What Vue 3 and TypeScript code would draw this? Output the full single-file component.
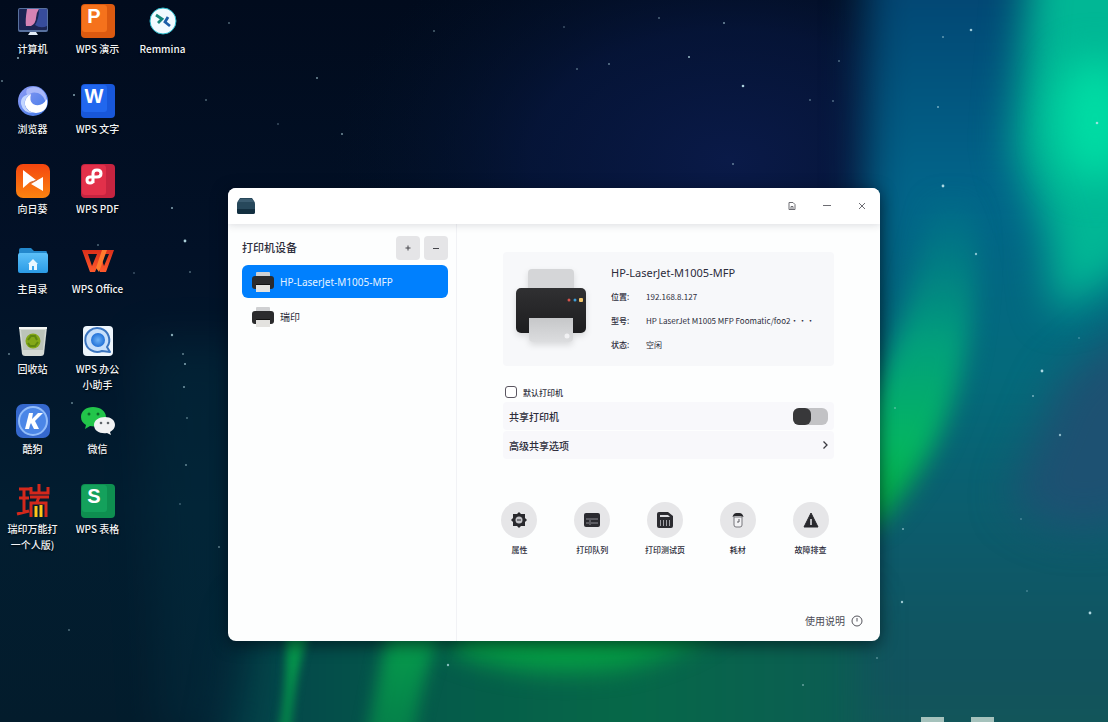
<script setup lang="ts">
import { ref } from 'vue'

interface Shortcut {
  icon: string
  label: string
  color?: string
  dark?: string
  letter?: string
}

const shortcuts: Shortcut[] = [
  { icon: 'computer', label: '计算机' },
  { icon: 'browser', label: '浏览器' },
  { icon: 'sunflower', label: '向日葵' },
  { icon: 'home', label: '主目录' },
  { icon: 'trash', label: '回收站' },
  { icon: 'kugou', label: '酷狗' },
  { icon: 'ruiyin', label: '瑞印万能打\n一个人版)' },
  { icon: 'key', label: 'WPS 演示', color: '#f5721c', dark: '#dc5a10', letter: 'P' },
  { icon: 'key', label: 'WPS 文字', color: '#2167ee', dark: '#1857da', letter: 'W' },
  { icon: 'pdf', label: 'WPS PDF' },
  { icon: 'wps', label: 'WPS Office' },
  { icon: 'helper', label: 'WPS 办公\n小助手' },
  { icon: 'wechat', label: '微信' },
  { icon: 'key', label: 'WPS 表格', color: '#14a15c', dark: '#0e8f50', letter: 'S' },
  { icon: 'remmina', label: 'Remmina' }
]

const printers = ['HP-LaserJet-M1005-MFP', '瑞印']
const selected = ref(0)
const isDefault = ref(false)
const shared = ref(false)

const details = [
  { name: '位置:', value: '192.168.8.127' },
  { name: '型号:', value: 'HP LaserJet M1005 MFP Foomatic/foo2···' },
  { name: '状态:', value: '空闲' }
]

const actions = [
  { icon: 'gear', label: '属性' },
  { icon: 'queue', label: '打印队列' },
  { icon: 'test', label: '打印测试页' },
  { icon: 'supply', label: '耗材' },
  { icon: 'warn', label: '故障排查' }
]

const stars: [number, number, number, number][] = [
  [689, 57, 1, 0.8], [743, 86, 1.3, 0.9], [724, 23, 1, 0.6], [659, 18, 1, 0.4], [609, 64, 1, 0.5],
  [185, 241, 1.4, 0.9], [172, 208, 1, 0.7], [229, 23, 1, 0.4], [434, 31, 1, 0.4], [317, 78, 1, 0.6],
  [206, 100, 1, 0.4], [342, 134, 1, 0.6], [278, 124, 1, 0.3], [564, 27, 1, 0.3], [577, 69, 1, 0.4],
  [733, 164, 1, 0.5], [839, 61, 1, 0.4], [971, 30, 1.3, 0.8], [943, 37, 1, 0.5], [938, 107, 1, 0.6],
  [943, 186, 1.4, 0.9], [976, 254, 1.2, 0.7], [1097, 123, 1.3, 0.8], [1042, 371, 1.4, 0.9], [1033, 396, 1, 0.6],
  [1060, 435, 1.2, 0.7], [903, 529, 1, 0.6], [902, 602, 1.2, 0.8], [1090, 613, 1.4, 0.9], [1027, 591, 1, 0.3],
  [803, 685, 1, 0.5], [877, 658, 1, 0.4], [448, 665, 1.2, 0.7], [219, 547, 1, 0.5], [69, 630, 1, 0.4],
  [172, 335, 1.2, 0.7], [185, 364, 1, 0.7], [183, 354, 1, 0.5], [184, 387, 1, 0.6], [72, 403, 1, 0.5],
  [9, 354, 1, 0.5], [187, 418, 1, 0.4], [186, 465, 1, 0.5], [180, 504, 1, 0.3], [18, 58, 1.1, 0.7],
  [2, 81, 1, 0.5], [74, 95, 1, 0.7], [98, 245, 1, 0.4], [134, 273, 1, 0.3], [190, 272, 1, 0.4],
  [1021, 519, 1, 0.3], [1079, 338, 1, 0.3], [833, 101, 1, 0.4], [810, 100, 1, 0.4], [895, 408, 1, 0.4]
]
</script>

<template>
  <div class="desktop">
    <svg class="wallpaper" viewBox="0 0 1108 722" preserveAspectRatio="none" color-interpolation-filters="sRGB" aria-hidden="true">
      <defs>
        <linearGradient id="night" x1="0" y1="0" x2="0" y2="1">
          <stop offset="0" stop-color="#010b1d" />
          <stop offset="0.35" stop-color="#021127" />
          <stop offset="0.7" stop-color="#021d30" />
          <stop offset="1" stop-color="#031c2c" />
        </linearGradient>
        <radialGradient id="navy">
          <stop offset="0" stop-color="#0a1a48" />
          <stop offset="0.5" stop-color="#071740" stop-opacity="0.7" />
          <stop offset="1" stop-color="#021127" stop-opacity="0" />
        </radialGradient>
        <linearGradient id="east" x1="0" y1="0" x2="0" y2="1">
          <stop offset="0" stop-color="#033c6c" />
          <stop offset="0.3" stop-color="#02658a" />
          <stop offset="0.5" stop-color="#046b7c" />
          <stop offset="0.7" stop-color="#0d5a6a" />
          <stop offset="0.85" stop-color="#12525c" />
          <stop offset="1" stop-color="#116056" />
        </linearGradient>
        <linearGradient id="ribbon" gradientUnits="userSpaceOnUse" x1="0" y1="190" x2="0" y2="530">
          <stop offset="0" stop-color="#008c8c" stop-opacity="0" />
          <stop offset="0.45" stop-color="#02a07c" />
          <stop offset="0.75" stop-color="#04b562" />
          <stop offset="1" stop-color="#04a838" />
        </linearGradient>
        <linearGradient id="streak" gradientUnits="userSpaceOnUse" x1="0" y1="630" x2="0" y2="722">
          <stop offset="0" stop-color="#069e4c" />
          <stop offset="1" stop-color="#05824a" />
        </linearGradient>
        <linearGradient id="meadow" gradientUnits="userSpaceOnUse" x1="220" y1="0" x2="900" y2="0">
          <stop offset="0" stop-color="#03404a" />
          <stop offset="0.3" stop-color="#055a4a" />
          <stop offset="0.6" stop-color="#066848" />
          <stop offset="1" stop-color="#0d5a55" />
        </linearGradient>
        <filter id="soft4" x="-50%" y="-50%" width="200%" height="200%"><feGaussianBlur stdDeviation="4" /></filter>
        <filter id="soft8" x="-50%" y="-50%" width="200%" height="200%"><feGaussianBlur stdDeviation="8" /></filter>
        <filter id="soft12" x="-50%" y="-50%" width="200%" height="200%"><feGaussianBlur stdDeviation="12" /></filter>
        <filter id="soft20" x="-50%" y="-50%" width="200%" height="200%"><feGaussianBlur stdDeviation="20" /></filter>
      </defs>
      <rect width="1108" height="722" fill="url(#night)" />
      <ellipse cx="730" cy="160" rx="400" ry="260" fill="url(#navy)" />
      <path d="M866-80 L1200-80 L1200 820 L560 820 L640 600 L866 400Z" fill="url(#east)" filter="url(#soft20)" />
      <path d="M250 610 L860 600 L860 790 L215 790Z" fill="url(#meadow)" filter="url(#soft20)" />
      <path d="M1160 300 L1160 500 Q1080 560 1010 500 L1060 380Z" fill="#1d5172" filter="url(#soft20)" />
      <path d="M1032-60 L1170-60 L1170 200 L1130 270 L1056 315 L1046 230 L1014 150Z" fill="#01b795" filter="url(#soft20)" />
      <ellipse cx="1095" cy="120" rx="40" ry="62" fill="#00dca4" filter="url(#soft20)" />
      <path d="M975 170 C982 310 968 430 880 522 L780 560 L850 430 C900 350 925 270 930 170Z" fill="url(#ribbon)" filter="url(#soft12)" />
      <path d="M470 600 L740 600 Q720 645 620 668 Q520 680 450 650Z" fill="#05a045" filter="url(#soft12)" />
      <path d="M286 625 L312 625 Q294 670 291 740 L276 740 Q288 690 286 625Z" fill="url(#streak)" filter="url(#soft4)" />
      <path d="M390 620 L446 620 Q420 680 414 740 L366 740Z" fill="url(#streak)" filter="url(#soft8)" />
      <path d="M140 340 L250 340 L250 740 L160 740Z" fill="#033243" opacity="0.4" filter="url(#soft20)" />
      <circle v-for="(s, i) in stars" :key="i" :cx="s[0]" :cy="s[1]" :r="s[2]" fill="#bfe6ee" :opacity="s[3]" />
      <path d="M921 717h23v5h-23zM971 717h23v5h-23z" fill="#a5c2bc" />
    </svg>

    <nav class="shortcuts" aria-label="桌面">
      <button v-for="s in shortcuts" :key="s.label" type="button" class="shortcut">
        <svg class="shortcut-icon" viewBox="0 0 34 34" aria-hidden="true">
          <defs>
            <linearGradient id="swirl" x1="0" y1="0" x2="1" y2="1"><stop offset="0" stop-color="#8f9cf5" /><stop offset="1" stop-color="#3f78e6" /></linearGradient>
            <linearGradient id="orange" x1="0" y1="0" x2="0" y2="1"><stop offset="0" stop-color="#f4450f" /><stop offset="1" stop-color="#fb8410" /></linearGradient>
            <linearGradient id="folder" x1="0" y1="0" x2="0" y2="1"><stop offset="0" stop-color="#5cc0f8" /><stop offset="1" stop-color="#2a9be6" /></linearGradient>
            <linearGradient id="wpsred" x1="0" y1="0" x2="0" y2="1"><stop offset="0" stop-color="#dc2f1a" /><stop offset="1" stop-color="#ff5a2c" /></linearGradient>
            <radialGradient id="ball"><stop offset="0" stop-color="#6db2f6" /><stop offset="1" stop-color="#2372d8" /></radialGradient>
          </defs>

          <g v-if="s.icon === 'key'">
            <rect width="34" height="34" rx="4" :fill="s.dark" />
            <rect x="1" y="1" width="25" height="27" rx="3" :fill="s.color" />
            <text x="13" y="19" text-anchor="middle" class="key-letter">{{ s.letter }}</text>
          </g>
          <g v-else-if="s.icon === 'pdf'">
            <rect width="34" height="34" rx="4" fill="#c62440" />
            <rect x="1" y="1" width="24" height="30" rx="3" fill="#e2304a" />
            <path d="M12 19V9.500q0-3.500 4-3.500t4 3.500t-4 3.500H9q-3 0-3 3t3 3t3-3" fill="none" stroke="#fff" stroke-width="3" />
          </g>
          <g v-else-if="s.icon === 'computer'">
            <rect x="2" y="4" width="30" height="24" rx="2" fill="#57709e" />
            <rect x="3" y="5" width="28" height="21" rx="1" fill="#1b2553" />
            <path d="M11 5h12q-3 4-3 9t-5 8h-5q-1-5 1-17z" fill="#d683b4" />
            <path d="M23 5h8v17q-6 3-12-1q4-6 4-16z" fill="#374c9b" />
            <path d="M14 28h6l2 3H12z" fill="#e4edf8" />
          </g>
          <g v-else-if="s.icon === 'browser'">
            <circle cx="17" cy="17" r="15" fill="url(#swirl)" />
            <path d="M11 5q10-5 17 3q4 6 2 12q-2-9-8-11q-7-2-10 3q-3-3-1-7z" fill="#a9b8fa" />
            <path d="M31 15q2 13-11 14q-9-1-11-8q-1-7 6-11q-2 7 2 10q8 4 14-5z" fill="#fff" />
            <path d="M15 10q-8 4-6 12q2 5 8 7q-10 0-12-9q-1-9 10-10z" fill="#c3d6ff" />
          </g>
          <g v-else-if="s.icon === 'sunflower'">
            <rect width="34" height="34" rx="7" fill="url(#orange)" />
            <path d="M7 6l13 10-6 2-7 6zM27 13v14l-12-7 5-3z" fill="#fff" />
            <path d="M14 19l7-3" stroke="#c5724a" stroke-width="1" />
          </g>
          <g v-else-if="s.icon === 'home'">
            <path d="M3 6q0-2 2-2h10l3 3h12q1 0 1 2v8H3z" fill="#2388cc" />
            <rect x="2" y="9" width="30" height="20" rx="2" fill="url(#folder)" />
            <path d="M17 15l5 5h-1v6h-3v-4h-2v4h-3v-6h-1z" fill="#e8f7ff" />
          </g>
          <g v-else-if="s.icon === 'trash'">
            <path d="M3 3h28l-3 27q-.4 2-3 2H9q-2.600 0-3-2z" fill="#d5dad5" />
            <path d="M5 6h24l-2 20H7z" fill="#bcc4ba" />
            <path d="M3 3h28v2H3z" fill="#f4f6f3" />
            <circle cx="17" cy="17" r="7.500" fill="#84a819" />
            <path d="M12 16l3-4h4l2 4M22 18l-3 4h-5l-2-3" stroke="#5f870f" stroke-width="2" fill="none" />
          </g>
          <g v-else-if="s.icon === 'kugou'">
            <rect width="34" height="34" rx="7" fill="#3568cd" />
            <circle cx="17" cy="17" r="14" fill="#4b86e7" stroke="#93bdfa" stroke-width="2" />
            <path d="M13 9h4l-1 6 6-6h5l-8 8 4 8h-5l-3-6-1 2-1 4H9z" fill="#fff" />
          </g>
          <g v-else-if="s.icon === 'ruiyin'" fill="none" stroke="#d3281c" stroke-width="3">
            <path d="M3 5h11M3 14h10M1 30l12-3M8 5v23M15 3v6h17V3M23 0v8M14 13h19M23 13l-2 5M15 33V19h15v14" />
            <path d="M20 22v11M25 21v12" stroke="#ffc61a" />
          </g>
          <g v-else-if="s.icon === 'wps'">
            <path d="M1 6h32L25 28h-6l-2-7-3 7H9z" fill="url(#wpsred)" />
            <path d="M7 10h9l-5 12zM23 10h5l-5 12-2-6z" fill="#071525" />
            <path d="M15 24l6-18h5l-8 22z" fill="#ff7b2e" />
          </g>
          <g v-else-if="s.icon === 'helper'">
            <rect x="2" y="2" width="30" height="30" rx="4" fill="#edf5fc" />
            <path d="M26 23a12 12 0 1 0-5 4l8 1z" fill="#c8e0fb" stroke="#3a74bf" stroke-width="2" stroke-linejoin="round" />
            <circle cx="17" cy="16" r="7" fill="url(#ball)" />
          </g>
          <g v-else-if="s.icon === 'wechat'">
            <path d="M12 3c-7 0-12 4-12 10 0 4 2 6 5 8l-1 4 5-3c10 2 16-3 16-9S19 3 12 3z" fill="#22c54a" />
            <circle cx="8" cy="10" r="1.500" fill="#0c6c2a" /><circle cx="17" cy="10" r="1.500" fill="#0c6c2a" />
            <path d="M24 13c-6 0-11 3-11 8 0 6 6 9 13 8l4 2-1-3c3-2 5-4 5-7 0-5-4-8-10-8z" fill="#f1f2f3" />
            <circle cx="20" cy="19" r="1.300" fill="#60656a" /><circle cx="27" cy="19" r="1.300" fill="#60656a" />
          </g>
          <g v-else>
            <circle cx="17" cy="17" r="13" fill="#f2fbff" stroke="#27b7c9" stroke-width="1" />
            <path d="M10 11l6 4-4 4" fill="none" stroke="#15857b" stroke-width="2.800" />
            <path d="M22 13l-3 5 5 4" fill="none" stroke="#1d5fa8" stroke-width="2.800" />
          </g>
        </svg>
        <span class="shortcut-label">{{ s.label }}</span>
      </button>
    </nav>

    <main class="window">
      <header class="titlebar">
        <svg class="app-icon" viewBox="0 0 20 16" aria-hidden="true">
          <path d="M4 0h12l2 3q1 1 1 3v8q0 2-2 2H3q-2 0-2-2V6q0-2 1-3z" fill="#27485b" />
          <path d="M4 1h12l2 3H2z" fill="#3b5c70" />
          <path d="M1 11h18v3q0 2-2 2H3q-2 0-2-2z" fill="#132f40" />
        </svg>
        <div class="controls">
          <button type="button" aria-label="菜单">
            <svg viewBox="0 0 10 10"><path d="M2 8.500V1.500h4l2 2v5zM4 8.500v-3h2v3" /></svg>
          </button>
          <button type="button" aria-label="最小化">
            <svg viewBox="0 0 10 10"><path d="M1 4.500h8" /></svg>
          </button>
          <button type="button" aria-label="关闭">
            <svg viewBox="0 0 10 10"><path d="M2 2l6 6M8 2l-6 6" /></svg>
          </button>
        </div>
      </header>

      <div class="body">
        <aside class="sidebar">
          <div class="sidebar-head">
            <h2>打印机设备</h2>
            <button type="button" aria-label="添加"><svg viewBox="0 0 10 10"><path d="M5 2.500v5M2.500 5h5" /></svg></button>
            <button type="button" aria-label="删除"><svg viewBox="0 0 10 10"><path d="M2 5.500h6" /></svg></button>
          </div>
          <ul class="printers">
            <li v-for="(p, i) in printers" :key="p">
              <button type="button" :class="{ active: selected === i }" @click="selected = i">
                <svg viewBox="0 0 22 22" aria-hidden="true">
                  <path d="M4 2q0-1 1-1h12q1 0 1 1v6H4z" fill="#cfd0d2" />
                  <rect y="5" width="22" height="13" rx="3" fill="#2b2b2d" />
                  <path d="M4 14h14v7H4z" fill="#e3e2df" />
                  <path d="M4 13h14v1H4z" fill="#111" />
                </svg>
                <span>{{ p }}</span>
              </button>
            </li>
          </ul>
        </aside>

        <section class="pane">
          <article class="card">
            <svg class="printer" viewBox="0 0 72 80" aria-hidden="true">
              <defs>
                <linearGradient id="shell" x1="0" y1="0" x2="0" y2="1"><stop offset="0" stop-color="#303032" /><stop offset="1" stop-color="#1d1d1f" /></linearGradient>
                <linearGradient id="paper" x1="0" y1="0" x2="0" y2="1"><stop offset="0" stop-color="#c6c7c9" /><stop offset="1" stop-color="#dcdddf" /></linearGradient>
              </defs>
              <path d="M13 24V8q0-4 4-4h38q4 0 4 4v16z" fill="#d5d6d8" />
              <rect x="1" y="23" width="70" height="45" rx="5" fill="url(#shell)" />
              <circle cx="54" cy="35" r="1.500" fill="#d6534c" />
              <circle cx="60" cy="35" r="1.500" fill="#3f9fd8" />
              <rect x="64" y="33" width="4" height="4" rx="1" fill="#f1c46a" />
              <path d="M14 53h44v20q0 4-4 4H18q-4 0-4-4z" fill="url(#paper)" />
              <circle cx="52" cy="71" r="2.500" fill="#f1f1f3" />
            </svg>
            <div class="info">
              <h1>HP-LaserJet-M1005-MFP</h1>
              <dl>
                <div v-for="d in details" :key="d.name">
                  <dt>{{ d.name }}</dt>
                  <dd>{{ d.value }}</dd>
                </div>
              </dl>
            </div>
          </article>

          <label class="default"><input v-model="isDefault" type="checkbox" />默认打印机</label>

          <label class="row share">
            <span>共享打印机</span>
            <input v-model="shared" type="checkbox" role="switch" />
          </label>
          <button type="button" class="row advanced">
            <span>高级共享选项</span>
            <svg viewBox="0 0 10 10" aria-hidden="true"><path d="M3.500 1.500L7 5 3.500 8.500" /></svg>
          </button>

          <div class="actions">
            <button v-for="a in actions" :key="a.label" type="button">
              <span class="disc">
                <svg viewBox="0 0 18 18" aria-hidden="true">
                  <g v-if="a.icon === 'gear'">
                    <path d="M9 1l2 2h4v4l2 2-2 2v4h-4l-2 2-2-2H3v-4L1 9l2-2V3h4z" fill="#29292d" />
                    <circle cx="9" cy="9" r="3.500" fill="#c4c4c8" /><path d="M7 9h4" stroke="#77777c" stroke-width="2" />
                  </g>
                  <g v-else-if="a.icon === 'queue'">
                    <rect x="1" y="2" width="16" height="14" rx="2" fill="#2b2b30" />
                    <path d="M3 8h12M3 12h3M8 12h7M7 9v5" stroke="#8d8d93" stroke-width="1" />
                  </g>
                  <g v-else-if="a.icon === 'test'">
                    <path d="M1 3q0-2 2-2h9l5 4v10q0 2-2 2H3q-2 0-2-2z" fill="#2b2b30" />
                    <path d="M4 4h8l2 2H4z" fill="#dcdce0" />
                    <path d="M4.500 9v6M7.500 9v6M10.500 9v6M13.500 9v6" stroke="#a0a0a5" stroke-width="1" />
                  </g>
                  <g v-else-if="a.icon === 'supply'">
                    <path d="M5 6h8v8q0 2-2 2H7q-2 0-2-2z" fill="#f2f2f4" stroke="#77777c" />
                    <path d="M3.500 6q1-4 4-4h3q3 0 4 4l-3-1H6z" fill="#29292d" />
                    <path d="M10 8v3H8" stroke="#5b5b60" fill="none" />
                  </g>
                  <g v-else>
                    <path d="M9 2l7 14H2z" fill="#29292d" stroke="#29292d" stroke-linejoin="round" />
                    <path d="M9 8v6" stroke="#b8b8bc" stroke-width="2" />
                  </g>
                </svg>
              </span>
              {{ a.label }}
            </button>
          </div>

          <a class="help" href="#help">使用说明
            <svg viewBox="0 0 12 12" aria-hidden="true"><circle cx="6" cy="6" r="5" /><path d="M6 3v3.500" /></svg>
          </a>
        </section>
      </div>
    </main>
  </div>
</template>

<style>
body {
  margin: 0;
  background: #021127;
}
</style>

<style scoped>
.desktop {
  position: relative;
  min-height: 100vh;
  overflow: hidden;
  font-family: 'Noto Sans', 'Noto Sans CJK SC', sans-serif;
  color: #2c2c3a;
}

.desktop * {
  box-sizing: border-box;
}

button {
  font: inherit;
  color: inherit;
  border: 0;
  padding: 0;
  background: none;
}

.wallpaper {
  position: absolute;
  inset: 0;
  width: 100%;
  height: 100%;
}

.shortcuts {
  position: relative;
  display: grid;
  grid-auto-flow: column;
  grid-template-rows: repeat(7, 80px);
  grid-auto-columns: 65px;
}

.shortcut {
  display: flex;
  flex-direction: column;
  align-items: center;
  justify-content: flex-start;
  gap: 3px;
  padding-top: 4px;
  font-family: 'Noto Sans CJK SC', sans-serif;
  color: #f2f5f8;
}

.shortcut-icon {
  flex: none;
  width: 34px;
  height: 34px;
  overflow: visible;
}

.shortcut-label {
  font-size: 10px;
  line-height: 16px;
  font-weight: 500;
  white-space: pre;
  text-shadow: 0 1px 2px #000;
}

.key-letter {
  font: 700 20px 'Liberation Sans', sans-serif;
  fill: #fff;
}

.window {
  position: absolute;
  top: 188px;
  left: 228px;
  right: 228px;
  min-height: 453px;
  display: flex;
  flex-direction: column;
  border-radius: 8px;
  overflow: hidden;
  background: #fdfefe;
  box-shadow: 0 4px 16px rgba(0, 8, 20, 0.6);
}

.titlebar {
  position: relative;
  display: flex;
  align-items: center;
  justify-content: space-between;
  height: 36px;
  padding: 0 8px;
  background: #fff;
  box-shadow: 0 1px 8px rgba(40, 40, 60, 0.16);
}

.app-icon {
  width: 20px;
  height: 16px;
}

.controls {
  display: flex;
  gap: 15px;
}

.controls button {
  display: grid;
  place-items: center;
  width: 20px;
  height: 20px;
}

.controls svg {
  width: 10px;
  height: 10px;
  fill: none;
  stroke: #6d6d73;
}

.body {
  flex: 1;
  display: flex;
}

.sidebar {
  flex: 0 0 229px;
  padding: 12px 8px 0 14px;
  border-right: 1px solid #f1f2f5;
}

.sidebar-head {
  display: flex;
  align-items: center;
  gap: 4px;
}

.sidebar-head h2 {
  flex: 1;
  margin: 0;
  font-size: 11px;
  line-height: 16px;
  font-weight: 500;
}

.sidebar-head button {
  display: grid;
  place-items: center;
  width: 24px;
  height: 24px;
  border-radius: 4px;
  background: #e5e5e7;
}

.sidebar-head svg {
  width: 10px;
  height: 10px;
  stroke: #44444a;
}

.printers {
  list-style: none;
  margin: 5px 0 0;
  padding: 0;
  display: grid;
  gap: 2px;
}

.printers button {
  display: flex;
  align-items: center;
  gap: 6px;
  width: 100%;
  height: 33px;
  padding: 0 10px;
  border-radius: 6px;
  font-size: 10px;
}

.printers button.active {
  background: #0080fe;
  color: #e5f3ff;
}

.printers svg {
  width: 22px;
  height: 22px;
}

.pane {
  flex: 1;
  min-width: 0;
  display: flex;
  flex-direction: column;
  padding: 28px 0 12px;
}

.card {
  display: flex;
  align-items: flex-start;
  gap: 24px;
  margin: 0 46px;
  padding: 13px 12px;
  border-radius: 4px;
  background: #f7f8fa;
}

.printer {
  flex: none;
  width: 72px;
  height: 80px;
  filter: drop-shadow(0 3px 3px rgba(0, 0, 0, 0.12));
}

.info {
  min-width: 0;
}

.info h1 {
  margin: 0;
  font-size: 11px;
  line-height: 16px;
  font-weight: 400;
}

.info dl {
  margin: 4px 0 0;
  font-size: 8px;
  line-height: 24px;
}

.info dl div {
  display: flex;
  height: 24px;
}

.info dl div:last-child {
  height: 20px;
}

.info dt {
  flex: 0 0 35px;
  font-weight: 500;
}

.info dd {
  margin: 0;
  font-family: 'Noto Sans CJK SC', sans-serif;
  white-space: nowrap;
}

.info dd:lang(zh) {
  font-weight: 400;
}

.default {
  display: flex;
  align-items: center;
  gap: 6px;
  height: 20px;
  margin: 16px 48px 0;
  font-size: 8px;
  font-weight: 500;
}

.default input {
  appearance: none;
  width: 12px;
  height: 12px;
  margin: 0;
  border: 1px solid #5a5560;
  border-radius: 3px;
  background: #fff;
}

.default input:checked {
  background: #0080fe;
}

.row {
  display: flex;
  align-items: center;
  justify-content: space-between;
  height: 28px;
  margin: 0 46px;
  padding: 0 6px;
  border-radius: 4px;
  background: #f8f8fb;
  font-size: 10px;
  font-weight: 500;
}

.advanced {
  margin-top: 1px;
}

.share input {
  appearance: none;
  display: flex;
  width: 35px;
  height: 17px;
  margin: 0;
  border-radius: 6px;
  background: #c2c2c5;
}

.share input::before {
  content: '';
  width: 18px;
  border-radius: 6px;
  background: #38383a;
}

.share input:checked {
  justify-content: flex-end;
  background: #0080fe;
}

.advanced svg {
  width: 10px;
  height: 10px;
  margin-right: -2px;
  fill: none;
  stroke: #3a3a40;
  stroke-width: 1.3;
}

.actions {
  display: grid;
  grid-template-columns: repeat(5, 1fr);
  margin: 43px 33px 0 26px;
}

.actions button {
  display: flex;
  flex-direction: column;
  align-items: center;
  gap: 4px;
  font-size: 8px;
  line-height: 16px;
  font-weight: 500;
}

.disc {
  display: grid;
  place-items: center;
  width: 36px;
  height: 36px;
  border-radius: 50%;
  background: #e6e6e8;
}

.disc svg {
  width: 18px;
  height: 18px;
}

.help {
  display: flex;
  align-items: center;
  gap: 6px;
  margin: auto 17px 0 auto;
  font-size: 10px;
  line-height: 16px;
  color: #4b4b55;
  text-decoration: none;
}

.help svg {
  width: 12px;
  height: 12px;
  fill: none;
  stroke: #55555c;
}
</style>
